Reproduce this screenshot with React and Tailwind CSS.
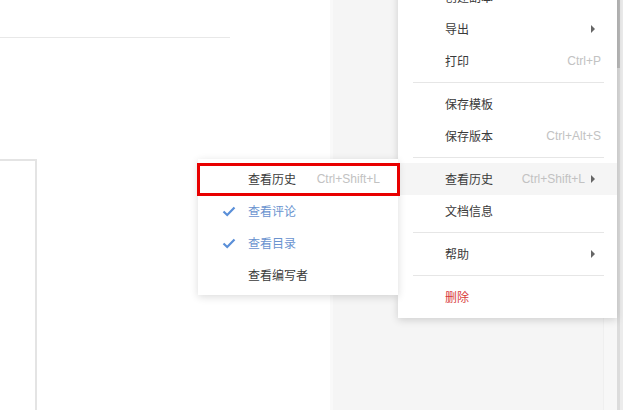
import { Fragment } from "react";

const mainItems = [
  { label: "创建副本" },
  { label: "导出", arrow: true },
  { label: "打印", shortcut: "Ctrl+P" },
  { sep: true },
  { label: "保存模板" },
  { label: "保存版本", shortcut: "Ctrl+Alt+S" },
  { sep: true },
  { label: "查看历史", shortcut: "Ctrl+Shift+L", arrow: true, active: true },
  { label: "文档信息" },
  { sep: true },
  { label: "帮助", arrow: true },
  { sep: true },
  { label: "删除", danger: true },
];

const subItems = [
  { label: "查看历史", shortcut: "Ctrl+Shift+L" },
  { label: "查看评论", checked: true },
  { label: "查看目录", checked: true },
  { label: "查看编写者" },
];

const Arrow = () => (
  <span className="ml-[6px] w-0 h-0 border-y-[4px] border-y-transparent border-l-[4px] border-l-[#666]" />
);

const Check = () => (
  <svg width="14" height="11" viewBox="0 0 14 11" className="absolute left-[24px]">
    <path d="M1.5 5.5 L5.2 9 L12.5 1.5" fill="none" stroke="#5a8fd8" strokeWidth="2.2" />
  </svg>
);

const App = () => {
  return (
    <div
      className="relative w-[623px] h-[410px] overflow-hidden flex bg-white text-[12px] text-[#3a3a3a]"
      style={{ fontFamily: '"Liberation Sans", "Noto Sans CJK SC", sans-serif' }}
    >
      {/* document area */}
      <div className="w-[330px] shrink-0 bg-white flex flex-col">
        <div className="h-[38px] w-[230px] border-b border-[#e8e8e8]" />
        <div className="mt-[121px] flex-1 w-[37px] border-t-2 border-r-2 border-[#e4e4e4]" />
      </div>

      {/* side panel */}
      <div className="flex-1 flex bg-[#f5f5f5] border-l-[3px] border-[#f9f9f9]">
        <div className="flex-1" />
        <div className="w-[14px] bg-[#f7f7f7] border-l border-[#efefef]" />
      </div>

      {/* scrollbar */}
      <div className="w-[6px] flex">
        <div className="w-[3px] flex flex-col bg-[#dcdcdc]">
          <div className="h-[68px] bg-[#bcbcbc]" />
        </div>
        <div className="w-[3px] bg-[#ececec]" />
      </div>

      {/* main menu */}
      <div className="absolute left-[398px] top-[-24px] w-[219px] bg-white py-[5px] shadow-[0_2px_8px_rgba(0,0,0,0.16)]">
        {mainItems.map((it, i) =>
          it.sep ? (
            <div key={i} className="py-[5px] pl-[15px] pr-[13px]">
              <div className="h-px bg-[#e6e6e6]" />
            </div>
          ) : (
            <div
              key={i}
              className={`h-[32px] flex items-center pl-[47px] pr-[16px] ${it.active ? "bg-[#f5f5f5]" : ""}`}
            >
              <span
                className={it.danger ? "text-[#d83a3a]" : "text-[#3a3a3a]"}
                style={{ fontFamily: '"Noto Sans CJK SC", sans-serif' }}
              >
                {it.label}
              </span>
              <span className="flex-1" />
              {it.shortcut && <span className="text-[#c2c2c2]">{it.shortcut}</span>}
              {it.arrow && (
                <Fragment>
                  {!it.shortcut && <span className="w-[6px]" />}
                  <Arrow />
                  <span className="w-[6px]" />
                </Fragment>
              )}
            </div>
          )
        )}
      </div>

      {/* submenu */}
      <div className="absolute left-[198px] top-[159px] w-[200px] bg-white py-[4px] shadow-[0_2px_8px_rgba(0,0,0,0.14)]">
        {subItems.map((it, i) => (
          <div key={i} className="relative h-[32px] flex items-center pl-[50px] pr-[18px]">
            {it.checked && <Check />}
            <span
              className={it.checked ? "text-[#6a93cf]" : "text-[#3a3a3a]"}
              style={{ fontFamily: '"Noto Sans CJK SC", sans-serif' }}
            >
              {it.label}
            </span>
            <span className="flex-1" />
            {it.shortcut && <span className="text-[#c2c2c2]">{it.shortcut}</span>}
          </div>
        ))}
      </div>

      {/* highlight annotation */}
      <div className="absolute left-[197px] top-[163px] w-[203px] h-[33px] border-[3px] border-[#e80000]" />
    </div>
  );
};

export default App;
